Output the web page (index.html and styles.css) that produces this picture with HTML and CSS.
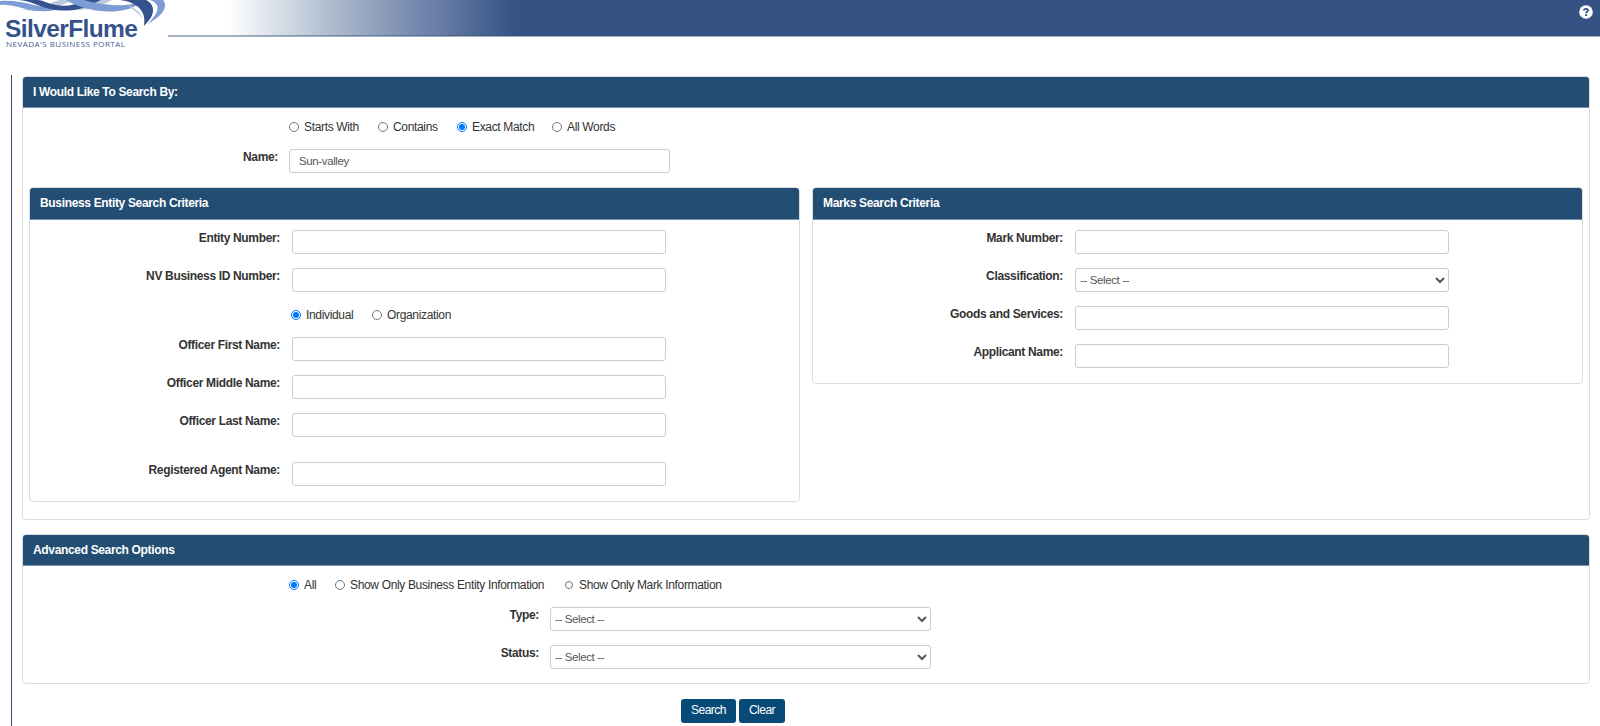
FILE: index.html
```
<!DOCTYPE html>
<html lang="en">
<head>
  <meta charset="utf-8">
  <title>SilverFlume</title>
  <link rel="stylesheet" href="styles.css">
</head>
<body>
  <header class="header">
    <div class="logo">
      <svg class="waves" width="168" height="28" viewBox="0 0 168 28">
        <path d="M22 9 C40 14 52 9 64 4 C72 1 76 0 82 0 L60 0 C50 2 42 9 22 9Z" fill="#bccbdc"/>
        <path d="M50 8 C64 5 72 12 88 9 C98 7 106 3 112 0 L96 0 C84 5 72 5 50 8Z" fill="#bccbdc"/>
        <path d="M0 5 C12 4 22 9 34 10.500 C46 12 54 11 62 8 C52 8 44 7 34 5 C22 2 12 0 0 1Z" fill="#7d9bd5"/>
        <path d="M18 0 C32 1 40 7 50 9 C64 12 80 11 92 4 C96 2 99 1 101 0 L84 0 C76 5 66 7 56 5 C46 3 42 0 38 0Z" fill="#34528f"/>
        <path d="M66 0 C82 9 100 13 118 11 C128 10 136 7 143 1 C132 5 122 6 112 5 C100 4 90 2 84 0Z" fill="#7d9bd5"/>
        <path d="M128 5 C134 7 140 12 143 19 C139 15 136 11 131 8Z" fill="#bccbdc"/>
        <path d="M120 0 C136 2 147 10 144 26 C149 20 153 17 153 10 C153 5 150 2 146 0Z" fill="#34528f"/>
        <path d="M150 0 C160 4 161 10 148 24 C159 17 165 12 165 5 C165 3 164 1 163 0Z" fill="#7d9bd5"/>
      </svg>
      <div class="logo-name">SilverFlume</div>
      <div class="logo-sub">NEVADA'S BUSINESS PORTAL</div>
    </div>
    <div class="bar">
      <svg class="help" width="14" height="14" viewBox="0 0 14 14">
        <circle cx="7" cy="7" r="6.8" fill="#fff"/>
        <path d="M4.9 5.5C5 3.3 9 3.3 9 5.4C9 6.8 7.1 6.7 7.1 8.3" fill="none" stroke="#345283" stroke-width="1.9"/>
        <rect x="6.1" y="9.2" width="2" height="1.8" fill="#345283"/>
      </svg>
    </div>
  </header>

  <main class="content">
    <section class="panel search-by">
      <h2 class="panel-heading">I Would Like To Search By:</h2>
      <div class="radios outer-radios">
        <label class="w-starts"><input type="radio" name="match">Starts With</label>
        <label class="w-contains"><input type="radio" name="match">Contains</label>
        <label class="w-exact"><input type="radio" name="match" checked>Exact Match</label>
        <label><input type="radio" name="match">All Words</label>
      </div>
      <div class="row name-row"><label for="name">Name:</label><input class="control" id="name" type="text" value="Sun-valley"></div>

      <div class="criteria">
        <section class="panel">
          <h2 class="panel-heading">Business Entity Search Criteria</h2>
          <div class="panel-body">
            <div class="row"><label>Entity Number:</label><input class="control" type="text"></div>
            <div class="row"><label>NV Business ID Number:</label><input class="control" type="text"></div>
            <div class="radios officer-radios">
              <label class="w-individual"><input type="radio" name="officer" checked>Individual</label>
              <label><input type="radio" name="officer">Organization</label>
            </div>
            <div class="row"><label>Officer First Name:</label><input class="control" type="text"></div>
            <div class="row"><label>Officer Middle Name:</label><input class="control" type="text"></div>
            <div class="row"><label>Officer Last Name:</label><input class="control" type="text"></div>
            <div class="row agent-row"><label>Registered Agent Name:</label><input class="control" type="text"></div>
          </div>
        </section>
        <section class="panel">
          <h2 class="panel-heading">Marks Search Criteria</h2>
          <div class="panel-body">
            <div class="row"><label>Mark Number:</label><input class="control" type="text"></div>
            <div class="row"><label>Classification:</label><select class="control"><option>-- Select --</option></select></div>
            <div class="row"><label>Goods and Services:</label><input class="control" type="text"></div>
            <div class="row"><label>Applicant Name:</label><input class="control" type="text"></div>
          </div>
        </section>
      </div>
    </section>

    <section class="panel advanced">
      <h2 class="panel-heading">Advanced Search Options</h2>
      <div class="radios outer-radios">
        <label class="w-all"><input type="radio" name="show" checked>All</label>
        <label class="w-entity"><input type="radio" name="show">Show Only Business Entity Information</label>
        <label><input class="small" type="radio" name="show">Show Only Mark Information</label>
      </div>
      <div class="row option-row"><label>Type:</label><select class="control"><option>-- Select --</option></select></div>
      <div class="row option-row"><label>Status:</label><select class="control"><option>-- Select --</option></select></div>
    </section>

    <div class="buttons">
      <button class="btn btn-search" type="button">Search</button>
      <button class="btn btn-clear" type="button">Clear</button>
    </div>
  </main>
</body>
</html>
```
FILE: styles.css
```
* {
  box-sizing: border-box;
}
body {
  margin: 0;
  height: 726px;
  overflow: hidden;
  background: #fff;
  color: #333;
  font: 12px/16px "Liberation Sans", Arial, sans-serif;
  letter-spacing: -0.34px;
}
.header {
  display: flex;
  height: 75px;
}
.logo {
  width: 168px;
  position: relative;
}
.waves {
  position: absolute;
  left: 0;
  top: 0;
}
.logo-name {
  padding: 17px 0 0 5px;
  color: #34528b;
  font-size: 24.5px;
  font-weight: bold;
  line-height: 24px;
  letter-spacing: -0.6px;
}
.logo-sub {
  padding-left: 6px;
  color: #3f5b93;
  font: 8px/6px "Open Sans", sans-serif;
  letter-spacing: 0.48px;
  white-space: nowrap;
}
.bar {
  flex: 1;
  height: 37px;
  border-bottom: 1px solid #9fb1c3;
  box-shadow: inset 0 -1px rgba(50, 80, 115, 0.45);
  background: linear-gradient(90deg, #fff 60px, #b1bed0 160px, #6e83aa 260px, #345283 348px);
}
.help {
  display: block;
  margin: 5px 7px 0 auto;
}
.content {
  margin-left: 11px;
  height: 651px;
  padding: 1px 10px 0;
  border-left: 1px solid #2a4f6c;
}
.panel {
  border: 1px solid #ddd;
  border-radius: 4px;
}
.search-by {
  height: 444px;
}
.panel-heading {
  margin: 0;
  height: 32px;
  padding: 0 10px;
  border-bottom: 1px solid #7894ad;
  border-radius: 3px 3px 0 0;
  background: #234d72;
  color: #fff;
  font-size: 12px;
  line-height: 31px;
}
.search-by > .panel-heading {
  height: 31px;
}
.advanced .panel-heading {
  height: 31px;
}
.radios {
  display: flex;
}
.radios label {
  display: flex;
  align-items: center;
  white-space: nowrap;
}
.radios input {
  width: 10px;
  height: 10px;
  margin: 0 5px 0 0;
}
.radios .small {
  width: 8px;
  height: 8px;
  margin: 0 6px 0 1px;
}
.radios .w-starts { width: 89px; }
.radios .w-contains { width: 79px; }
.radios .w-exact { width: 95px; }
.radios .w-individual { width: 81px; }
.radios .w-all { width: 46px; }
.radios .w-entity { width: 229px; }
.outer-radios {
  padding: 11px 0 0 266px;
}
.row {
  display: flex;
  height: 24px;
  margin-bottom: 14px;
}
.row label {
  width: 250px;
  margin-right: 12px;
  text-align: right;
  font-weight: bold;
}
.control {
  width: 374px;
  height: 24px;
  padding: 0 9px;
  border: 1px solid #ccc;
  border-radius: 3px;
  background: #fff;
  color: #555;
  font: 11.5px "Liberation Sans", Arial, sans-serif;
  letter-spacing: -0.38px;
}
select.control {
  padding: 0;
}
.name-row {
  margin: 14px 0;
}
.name-row label {
  width: 255px;
  margin-right: 11px;
}
.name-row .control {
  width: 381px;
}
.criteria {
  display: flex;
  align-items: flex-start;
  gap: 12px;
  padding: 0 6px;
}
.criteria .panel {
  flex: 1;
}
.panel-body {
  padding: 10px 0 0;
}
.officer-radios {
  padding-left: 261px;
  height: 31px;
}
.officer-radios label {
  height: 18px;
}
.agent-row {
  margin-top: 25px;
}
.criteria .row:last-child {
  margin-bottom: 15px;
}
.advanced {
  height: 150px;
  margin-top: 14px;
}
.advanced .outer-radios {
  margin-bottom: 14px;
}
.option-row label {
  width: 516px;
  margin-right: 11px;
}
.option-row .control {
  width: 381px;
}
.buttons {
  display: flex;
  gap: 3px;
  padding: 15px 0 0 659px;
}
.btn {
  height: 24px;
  padding: 0 0 3px;
  border: 0;
  border-radius: 3px;
  background: #074a78;
  color: #fff;
  font: 12px "Liberation Sans", Arial, sans-serif;
  letter-spacing: -0.5px;
}
.btn-search {
  width: 55px;
}
.btn-clear {
  width: 46px;
}
```
